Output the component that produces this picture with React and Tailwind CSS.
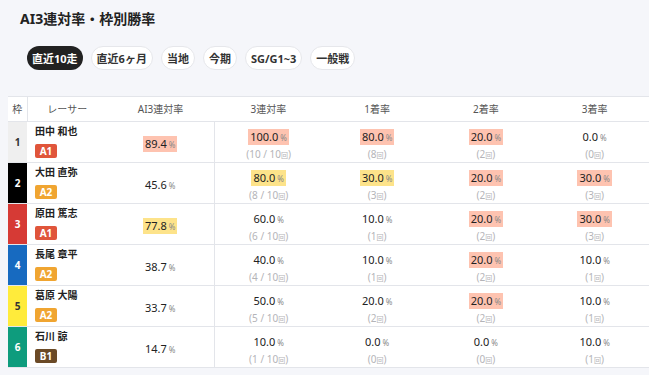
import React from 'react'

const tabs = ['直近10走', '直近6ヶ月', '当地', '今期', 'SG/G1~3', '一般戦']

const frameColors = {
  1: 'bg-[#efefef] text-[#333]',
  2: 'bg-black text-white',
  3: 'bg-[#d63a35] text-white',
  4: 'bg-[#176ac0] text-white',
  5: 'bg-[#ffeb3b] text-[#333]',
  6: 'bg-[#0e9c7d] text-white',
}

const gradeColors = {
  A1: 'bg-[#e0553b]',
  A2: 'bg-[#f0a531]',
  B1: 'bg-[#6b4a26]',
}

const hl = {
  r: 'bg-[#fec3b0]',
  y: 'bg-[#fde38a]',
  '': '',
}

const rows = [
  { n: 1, name: '田中 和也', grade: 'A1', ai: ['89.4', 'r'], cols: [['100.0', '10 / 10', 'r'], ['80.0', '8', 'r'], ['20.0', '2', 'r'], ['0.0', '0', '']] },
  { n: 2, name: '大田 直弥', grade: 'A2', ai: ['45.6', ''], cols: [['80.0', '8 / 10', 'y'], ['30.0', '3', 'y'], ['20.0', '2', 'r'], ['30.0', '3', 'r']] },
  { n: 3, name: '原田 篤志', grade: 'A1', ai: ['77.8', 'y'], cols: [['60.0', '6 / 10', ''], ['10.0', '1', ''], ['20.0', '2', 'r'], ['30.0', '3', 'r']] },
  { n: 4, name: '長尾 章平', grade: 'A2', ai: ['38.7', ''], cols: [['40.0', '4 / 10', ''], ['10.0', '1', ''], ['20.0', '2', 'r'], ['10.0', '1', '']] },
  { n: 5, name: '葛原 大陽', grade: 'A2', ai: ['33.7', ''], cols: [['50.0', '5 / 10', ''], ['20.0', '2', ''], ['20.0', '2', 'r'], ['10.0', '1', '']] },
  { n: 6, name: '石川 諒', grade: 'B1', ai: ['14.7', ''], cols: [['10.0', '1 / 10', ''], ['0.0', '0', ''], ['0.0', '0', ''], ['10.0', '1', '']] },
]

function Pct({ value, tone }) {
  return (
    <span className={`inline-flex items-baseline px-[2px] leading-[15px] text-[11px] text-[#222] ${hl[tone]}`}>
      {value}
      <span className="ml-[2px] text-[8px] text-[#888]">%</span>
    </span>
  )
}

export default function App() {
  return (
    <div className="min-h-[375px] bg-[#f5f6fa] font-['Noto_Sans','Noto_Sans_CJK_JP',sans-serif] text-[#222]">
      <h1 className="px-5 pt-[9px] text-[14px] font-bold leading-[20px]">AI3連対率・枠別勝率</h1>
      <div className="mt-[17px] flex gap-2 pl-[27px]">
        {tabs.map((t, i) => (
          <button
            key={t}
            className={`h-6 rounded-full px-[5px] text-[11px] font-bold leading-none ${
              i === 0 ? 'bg-[#222] text-white' : 'border border-[#e6e7eb] bg-white text-[#333]'
            }`}
          >
            {t}
          </button>
        ))}
      </div>
      <div className="ml-2 mt-[26px]">
        <table className="w-full table-fixed border-collapse bg-white">
          <colgroup>
            <col className="w-[19px]" />
            <col className="w-[80px]" />
            <col className="w-[107px]" />
            <col />
            <col />
            <col />
            <col />
          </colgroup>
          <thead>
            <tr className="h-[25px] border-y border-[#e3e5ea] text-[10px] font-normal text-[#555]">
              <th className="border-r border-[#e3e5ea] font-normal">枠</th>
              <th className="font-normal">レーサー</th>
              <th className="font-normal">AI3連対率</th>
              <th className="font-normal">3連対率</th>
              <th className="font-normal">1着率</th>
              <th className="font-normal">2着率</th>
              <th className="font-normal">3着率</th>
            </tr>
          </thead>
          <tbody>
            {rows.map((r) => (
              <tr key={r.n} className="h-[41px] border-b border-[#e3e5ea]">
                <td className={`text-center text-[10px] font-bold ${frameColors[r.n]}`}>{r.n}</td>
                <td className="pl-2 pt-[2px] align-middle">
                  <div className="text-[10px] font-bold leading-[12px] text-[#222]">{r.name}</div>
                  <span className={`mt-[2px] inline-block h-[14px] w-[22px] rounded-[2px] text-center text-[10px] font-bold leading-[14px] text-white ${gradeColors[r.grade]}`}>
                    {r.grade}
                  </span>
                </td>
                <td className="border-r border-[#e3e5ea] text-center">
                  <Pct value={r.ai[0]} tone={r.ai[1]} />
                </td>
                {r.cols.map(([v, c, tone], i) => (
                  <td key={i} className="text-center align-middle">
                    <div>
                      <Pct value={v} tone={tone} />
                    </div>
                    <div className="mt-[1px] text-[10px] leading-[12px] text-[#b4b4b8]">
                      ({c}
                      <span className="text-[7px]">回</span>)
                    </div>
                  </td>
                ))}
              </tr>
            ))}
          </tbody>
        </table>
      </div>
    </div>
  )
}
